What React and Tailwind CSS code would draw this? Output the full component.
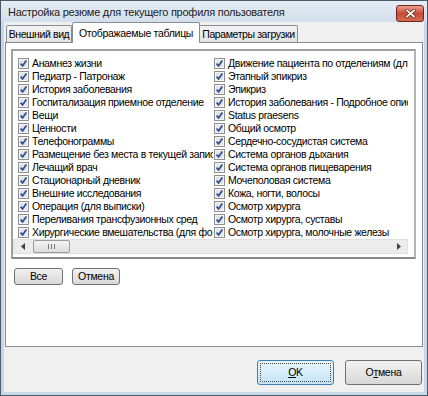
import React from "react";

const leftItems = [
  "Анамнез жизни",
  "Педиатр - Патронаж",
  "История заболевания",
  "Госпитализация приемное отделение",
  "Вещи",
  "Ценности",
  "Телефонограммы",
  "Размещение без места в текущей запис",
  "Лечащий врач",
  "Стационарный дневник",
  "Внешние исследования",
  "Операция (для выписки)",
  "Переливания трансфузионных сред",
  "Хирургические вмешательства (для фо",
];

const rightItems = [
  "Движение пациента по отделениям (дл",
  "Этапный эпикриз",
  "Эпикриз",
  "История заболевания - Подробное опис",
  "Status praesens",
  "Общий осмотр",
  "Сердечно-сосудистая система",
  "Система органов дыхания",
  "Система органов пищеварения",
  "Мочеполовая система",
  "Кожа, ногти, волосы",
  "Осмотр хирурга",
  "Осмотр хирурга, суставы",
  "Осмотр хирурга, молочные железы",
];

const CheckBox = () => (
  <svg width="11" height="11" viewBox="0 0 11 11" className="shrink-0">
    <rect x="0.5" y="0.5" width="10" height="10" fill="#f5f5f5" stroke="#8e8f8f" />
    <rect x="2" y="2" width="7" height="7" fill="#e4e4e4" />
    <path d="M2.6 5.6 L4.6 7.8 L8.4 2.6" stroke="#2c4f9e" strokeWidth="1.7" fill="none" />
  </svg>
);

const Row = ({ label }) => (
  <div className="h-[13px] flex items-center gap-[3px] pl-[1px] whitespace-nowrap overflow-hidden">
    <CheckBox />
    <span className="leading-[13px] tracking-[-0.35px]">{label}</span>
  </div>
);

const Tab = ({ children, active, className }) => (
  <div
    className={
      active
        ? "relative z-10 -mb-px h-[21px] bg-white border border-b-0 border-[#898c95] rounded-t-[2px] flex items-start pt-[3px] justify-center whitespace-nowrap " + className
        : "h-[17px] bg-gradient-to-b from-[#f3f3f3] to-[#e3e3e3] border border-b-0 border-[#898c95] rounded-t-[2px] flex items-start pt-[1px] justify-center whitespace-nowrap tracking-[-0.4px] " + className
    }
  >
    {children}
  </div>
);

export default function App() {
  return (
    <div
      className="w-[428px] h-[396px] bg-[#c8d6e6] border border-[#4b5a6c] flex flex-col text-[10.5px] tracking-[-0.3px] text-black overflow-hidden"
      style={{ fontFamily: '"Liberation Sans", Arial, sans-serif' }}
    >
      {/* title bar */}
      <div className="h-[21px] shrink-0 flex items-center justify-between pl-[7px] pr-[3px] bg-gradient-to-b from-[#e6edf5] to-[#d3dfec]">
        <span className="text-[11px] tracking-[-0.25px] text-[#1b1b1b] pt-[1px] whitespace-nowrap">
          Настройка резюме для текущего профиля пользователя
        </span>
        <div className="w-[28px] h-[17px] mt-[4px] rounded-[3px] border border-[#6e2419] bg-gradient-to-b from-[#e8a090] via-[#c94a36] to-[#d56a50] flex items-center justify-center">
          <svg width="11" height="9" viewBox="0 0 11 9">
            <path d="M2 1.5 L9 7.5 M9 1.5 L2 7.5" stroke="#5a1a10" strokeWidth="3" strokeLinecap="square" />
            <path d="M2 1.5 L9 7.5 M9 1.5 L2 7.5" stroke="#ffffff" strokeWidth="1.8" strokeLinecap="square" />
          </svg>
        </div>
      </div>

      {/* client area */}
      <div className="flex-1 mx-[3px] mb-[3px] bg-[#f0f0f0] flex flex-col">
        <div className="h-[20px] flex items-end pl-[2px]">
          <Tab className="w-[66px]">Внешний вид</Tab>
          <Tab active className="w-[128px]">Отображаемые таблицы</Tab>
          <Tab className="w-[99px] -ml-px">Параметры загрузки</Tab>
        </div>

        <div className="ml-[1px] w-[418px] h-[305px] bg-white border border-[#898c95] flex flex-col">
          {/* list box */}
          <div className="ml-[5px] mt-[6px] w-[405px] h-[210px] border-2 border-t-[#a0a0a0] border-l-[#a0a0a0] border-r-[#b4b4b4] border-b-[#8a8a8a] pr-[5px] flex flex-col">
            <div className="w-[395px] flex flex-col flex-1">
              <div className="flex pt-[6px] pl-[4px] overflow-hidden">
                <div className="w-[196px] shrink-0 flex flex-col overflow-hidden">
                  {leftItems.map((t) => (
                    <Row key={t} label={t} />
                  ))}
                </div>
                <div className="w-[195px] shrink-0 flex flex-col overflow-hidden">
                  {rightItems.map((t) => (
                    <Row key={t} label={t} />
                  ))}
                </div>
              </div>
              {/* horizontal scrollbar */}
              <div className="h-[15px] bg-[#ececec] border border-[#e0e0e0] flex items-center">
                <div className="w-[17px] h-full flex items-center justify-center">
                  <svg width="4" height="7" viewBox="0 0 4 7">
                    <path d="M4 0 L0 3.5 L4 7 Z" fill="#404040" />
                  </svg>
                </div>
                <div className="ml-[2px] w-[37px] h-[13px] rounded-[2px] border border-[#9a9a9a] bg-gradient-to-b from-[#f4f4f4] to-[#dcdcdc] flex items-center justify-center gap-[2px]">
                  <div className="w-px h-[5px] bg-[#777]" />
                  <div className="w-px h-[5px] bg-[#777]" />
                  <div className="w-px h-[5px] bg-[#777]" />
                </div>
                <div className="flex-1" />
                <div className="w-[17px] h-full flex items-center justify-center">
                  <svg width="4" height="7" viewBox="0 0 4 7">
                    <path d="M0 0 L4 3.5 L0 7 Z" fill="#404040" />
                  </svg>
                </div>
              </div>
            </div>
          </div>

          <div className="flex gap-[9px] ml-[8px] mt-[9px]">
            <button className="w-[49px] h-[17px] rounded-[3px] border border-[#707070] bg-gradient-to-b from-[#f2f2f2] to-[#d8d8d8] flex items-center justify-center">
              Все
            </button>
            <button className="w-[48px] h-[17px] rounded-[3px] border border-[#707070] bg-gradient-to-b from-[#f2f2f2] to-[#d8d8d8] flex items-center justify-center">
              Отмена
            </button>
          </div>
        </div>

        {/* bottom buttons */}
        <div className="flex-1 flex justify-end items-start pt-[13px] pr-[2px] gap-[11px]">
          <button className="w-[77px] h-[25px] rounded-[3px] border border-[#3c7fb1] bg-gradient-to-b from-[#eaf6fd] to-[#c4e5f6] p-[2px]">
            <div className="w-full h-full border border-dotted border-[#444] flex items-center justify-center">
              <span>
                <span className="underline">O</span>K
              </span>
            </div>
          </button>
          <button className="w-[77px] h-[25px] rounded-[3px] border border-[#707070] bg-gradient-to-b from-[#f2f2f2] to-[#d8d8d8] flex items-center justify-center">
            <span>
              О<span className="underline">т</span>мена
            </span>
          </button>
        </div>
      </div>
    </div>
  );
}
